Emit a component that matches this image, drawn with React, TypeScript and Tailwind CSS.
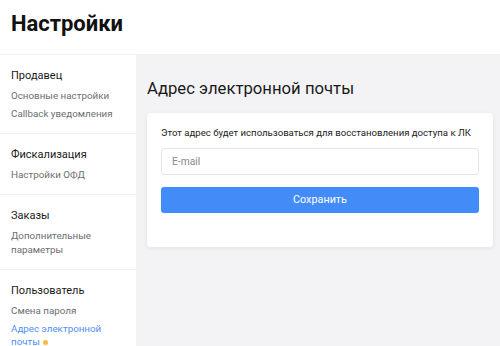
const sections = [
  { title: 'Продавец', items: ['Основные настройки', 'Callback уведомления'] },
  { title: 'Фискализация', items: ['Настройки ОФД'] },
  { title: 'Заказы', items: ['Дополнительные параметры'] },
  { title: 'Пользователь', items: ['Смена пароля'] },
];

export default function App() {
  return (
    <div className="w-[500px] h-[346px] overflow-hidden bg-white font-['Roboto',sans-serif] flex flex-col">
      <header className="h-[55px] shrink-0 border-b border-[#f1f1f3] px-[11px] flex items-center">
        <h1 className="text-[22px] leading-none font-bold text-[#111] pb-[6px]">Настройки</h1>
      </header>
      <div className="flex flex-1 min-h-0">
        <aside className="w-[136px] shrink-0 bg-white">
          {sections.map((s) => (
            <div key={s.title} className="px-[11px] pt-[12px] pb-[12px] border-b border-[#f1f1f3] last:border-b-0">
              <div className="text-[11px] leading-[18px] text-[#1a1a1a]">{s.title}</div>
              <div className="flex flex-col gap-[4px] mt-[4px]">
                {s.items.map((it) => (
                  <div key={it} className="text-[9.8px] leading-[14px] text-[#6e6e6e] pr-[6px]">
                    {it}
                  </div>
                ))}
                {s.title === 'Пользователь' && (
                  <div className="text-[9.8px] leading-[13px] text-[#4f8ef7] pr-[6px]">
                    Адрес электронной почты
                    <span className="inline-block w-[5px] h-[5px] rounded-full bg-[#f7b943] ml-[3px] align-middle" />
                  </div>
                )}
              </div>
            </div>
          ))}
        </aside>
        <main className="flex-1 min-w-0 bg-[#f3f3f5] pl-[11px] pr-[7px] pt-[23px]">
          <h2 className="text-[16.7px] leading-[22px] text-[#1a1a1a] mb-[13px]">Адрес электронной почты</h2>
          <div className="bg-white rounded-[4px] shadow-[0_1px_4px_rgba(0,0,0,0.08)] px-[14px] pt-[12px] pb-[34px]">
            <p className="text-[9.6px] leading-[16px] text-[#222] mb-[7px] whitespace-nowrap">
              Этот адрес будет использоваться для восстановления доступа к ЛК
            </p>
            <input
              placeholder="E-mail"
              className="block w-full h-[27px] border border-[#e5e5e8] rounded-[3px] px-[10px] text-[10.3px] placeholder:text-[#8a8a8a] outline-none"
            />
            <button className="mt-[12px] block w-full h-[26px] rounded-[3px] bg-[#438cf7] text-white text-[10.8px]">
              Сохранить
            </button>
          </div>
        </main>
      </div>
    </div>
  );
}
